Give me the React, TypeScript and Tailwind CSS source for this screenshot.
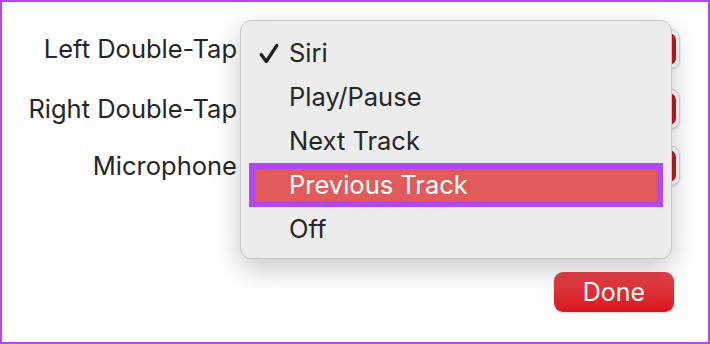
import React from 'react';

const labels = [
  { text: 'Left Double-Tap', className: 'mt-[27px]' },
  { text: 'Right Double-Tap', className: 'mt-[20px]' },
  { text: 'Microphone', className: 'mt-[17px]' },
];

const options = ['Siri', 'Play/Pause', 'Next Track', 'Previous Track', 'Off'];

const CheckIcon: React.FC = () => (
  <svg width="20" height="21" viewBox="0 0 20 21" fill="none">
    <path d="M2.2 11.5 L7.3 18.5 L17.8 2.5" stroke="#1f1f1f" strokeWidth="3.2" strokeLinecap="round" strokeLinejoin="round" />
  </svg>
);

const PopupButton: React.FC = () => (
  <div className="ml-[13px] flex h-[40px] w-[430px] items-center justify-end rounded-[9px] border border-[#d6d6d6] bg-white p-[3px] shadow-[0_1px_2px_rgba(0,0,0,0.15)]">
    <div className="h-full w-[28px] rounded-[7px] bg-[#c8161d]" />
  </div>
);

export default function App() {
  return (
    <div
      className="relative h-[344px] w-[710px] overflow-hidden border-2 border-[#b347f5] bg-white text-[#262626]"
      style={{ fontFamily: 'Inter, "Noto Sans", sans-serif' }}
    >
      <div className="flex flex-col">
        {labels.map((l) => (
          <div key={l.text} className={`flex items-center ${l.className}`}>
            <div className="w-[235px] text-right text-[25.5px] leading-none">{l.text}</div>
            <PopupButton />
          </div>
        ))}
      </div>

      <div className="mt-[86px] flex justify-end pr-[34px]">
        <button className="flex h-[40px] w-[120px] items-center justify-center rounded-[9px] bg-gradient-to-b from-[#e4434a] to-[#d8131c] text-[25px] leading-none text-white shadow-[0_1px_2px_rgba(0,0,0,0.2)]">
          Done
        </button>
      </div>

      <div className="absolute left-[238px] top-[18px] h-[239px] w-[432px] rounded-[11px] border border-[#c6c6c6] bg-[#ececec] pt-[10px] shadow-[0_10px_28px_rgba(0,0,0,0.22)]">
        {options.map((o, i) => {
          const active = o === 'Previous Track';
          return (
            <div
              key={o}
              className={`mx-[8px] flex h-[44px] items-center border-[6px] pl-[4px] text-[25.5px] leading-none ${
                active ? 'border-[#b347f5] bg-[#e35a5a] text-white' : 'border-transparent'
              }`}
            >
              <div className="w-[30px]">{i === 0 && <CheckIcon />}</div>
              <span>{o}</span>
            </div>
          );
        })}
      </div>
    </div>
  );
}
